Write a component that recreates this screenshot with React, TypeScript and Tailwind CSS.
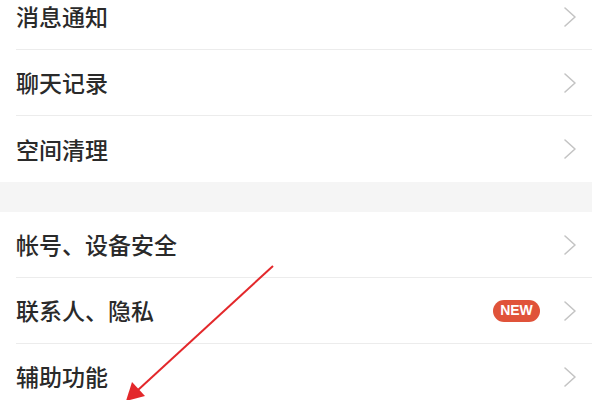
import React from 'react';

type Row = { label: string; badge?: string };

const groupA: Row[] = [
  { label: '消息通知' },
  { label: '聊天记录' },
  { label: '空间清理' },
];

const groupB: Row[] = [
  { label: '帐号、设备安全' },
  { label: '联系人、隐私', badge: 'NEW' },
  { label: '辅助功能' },
];

function Chevron() {
  return (
    <svg width="16" height="22" viewBox="0 0 16 22" fill="none">
      <path d="M3 2 L13 11 L3 20" stroke="#c4c4c4" strokeWidth="1.6" strokeLinecap="round" strokeLinejoin="round" />
    </svg>
  );
}

function SettingRow({ row, last }: { row: Row; last?: boolean }) {
  return (
    <div className="pl-4">
      <div className={`h-[66px] flex items-center pr-[14px] ${last ? '' : 'border-b border-[#ececec]'}`}>
        <span className="flex-1 text-[23px] font-medium text-[#2a2a2a] leading-none">{row.label}</span>
        {row.badge && (
          <span className="mr-[22px] h-[22px] w-[47px] rounded-full bg-[#e0533a] text-white text-[14px] font-bold flex items-center justify-center font-['Liberation_Sans',sans-serif]">
            {row.badge}
          </span>
        )}
        <Chevron />
      </div>
    </div>
  );
}

export default function App() {
  return (
    <div className="relative w-[600px] h-[400px] overflow-hidden bg-white font-['Noto_Sans_CJK_SC','Noto_Sans',sans-serif]">
      <div className="w-[592px] -mt-4">
        {groupA.map((r, i) => (
          <SettingRow key={r.label} row={r} last={i === groupA.length - 1} />
        ))}
        <div className="h-[30px] bg-[#f5f5f5]" />
        {groupB.map((r) => (
          <SettingRow key={r.label} row={r} />
        ))}
      </div>

      {/* red annotation arrow */}
      <svg className="absolute inset-0 pointer-events-none" width="600" height="400" viewBox="0 0 600 400">
        <line x1="273" y1="266" x2="138" y2="390" stroke="#e3282b" strokeWidth="2" />
        <polygon points="126,401 132,382 145,396" fill="#e3282b" />
      </svg>
    </div>
  );
}
